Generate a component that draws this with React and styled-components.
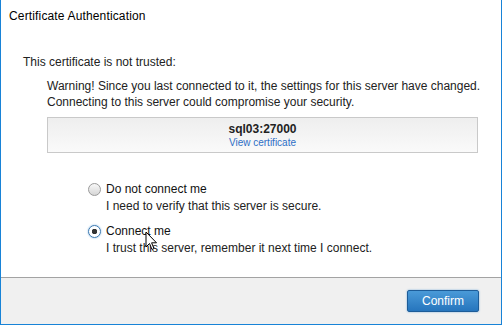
import styled, { createGlobalStyle } from "styled-components";

const GlobalStyle = createGlobalStyle`
  html, body {
    margin: 0;
    padding: 0;
    background: #ffffff;
  }
  body {
    font-family: "Liberation Sans", Arial, sans-serif;
    font-size: 12px;
    color: #1e1e1e;
  }
`;

const Window = styled.div`
  position: relative;
  width: 502px;
  height: 325px;
  box-sizing: border-box;
  border: 1px solid #1883d7;
  border-top: none;
  background: #ffffff;
  display: flex;
  flex-direction: column;
`;

const TitleBar = styled.div`
  height: 32px;
  display: flex;
  align-items: center;
  padding-left: 8px;
  font-size: 12px;
  letter-spacing: 0.15px;
  color: #000;
`;

const Body = styled.div`
  flex: 1;
  padding: 22px 0 0 22px;
  line-height: 16px;
`;

const Heading = styled.div`
  color: #222;
`;

const Warning = styled.div`
  margin: 8px 0 0 24px;
  color: #222;
`;

const CertBox = styled.div`
  margin: 7px 0 0 24px;
  width: 431px;
  height: 36px;
  box-sizing: border-box;
  border: 1px solid #c9c9c9;
  background: linear-gradient(#eeeeee, #fafafa);
  display: flex;
  flex-direction: column;
  align-items: center;
  justify-content: center;
`;

const Server = styled.div`
  font-weight: bold;
  font-size: 12px;
  line-height: 14px;
  color: #222;
`;

const CertLink = styled.a`
  font-size: 10px;
  line-height: 13px;
  color: #2e6fc6;
  text-decoration: none;
`;

const Options = styled.div`
  margin: 28px 0 0 65px;
  display: flex;
  flex-direction: column;
  gap: 9px;
`;

const Option = styled.div`
  display: grid;
  grid-template-columns: 13px auto;
  column-gap: 5px;
  row-gap: 1px;
  align-items: center;
`;

const Radio = styled.span`
  width: 13px;
  height: 13px;
  box-sizing: border-box;
  border-radius: 50%;
  border: 1px solid ${(p) => (p.checked ? "#3a78b0" : "#9a9a9a")};
  background: ${(p) =>
    p.checked
      ? "radial-gradient(circle, #333 0 2.5px, #ffffff 3px)"
      : "linear-gradient(#f8f8f8, #d6d6d6)"};
  box-shadow: ${(p) => (p.checked ? "0 0 2px #7fb2e0" : "none")};
`;

const OptionLabel = styled.span`
  color: #111;
`;

const OptionHint = styled.span`
  grid-column: 2;
  color: #222;
`;

const Footer = styled.div`
  height: 47px;
  border-top: 1px solid #a3a3a3;
  background: #f0f0f0;
  display: flex;
  justify-content: flex-end;
  align-items: flex-start;
  padding: 12px 22px 0 0;
  box-sizing: border-box;
`;

const Button = styled.button`
  width: 72px;
  height: 22px;
  border: 1px solid #1d5c98;
  border-radius: 2px;
  background: linear-gradient(#4a9ad8, #2675bd);
  box-shadow: 0 0 2px #6fa8d8;
  color: #ffffff;
  font-family: "Liberation Sans", Arial, sans-serif;
  font-size: 12px;
  padding: 0;
`;

const Cursor = styled.svg`
  position: absolute;
  left: 144px;
  top: 231px;
`;

export default function App() {
  return (
    <>
      <GlobalStyle />
      <Window>
        <TitleBar>Certificate Authentication</TitleBar>
        <Body>
          <Heading>This certificate is not trusted:</Heading>
          <Warning>
            Warning! Since you last connected to it, the settings for this server have changed.
            <br />
            Connecting to this server could compromise your security.
          </Warning>
          <CertBox>
            <Server>sql03:27000</Server>
            <CertLink href="#">View certificate</CertLink>
          </CertBox>
          <Options>
            <Option>
              <Radio />
              <OptionLabel>Do not connect me</OptionLabel>
              <OptionHint>I need to verify that this server is secure.</OptionHint>
            </Option>
            <Option>
              <Radio checked />
              <OptionLabel>Connect me</OptionLabel>
              <OptionHint>I trust this server, remember it next time I connect.</OptionHint>
            </Option>
          </Options>
        </Body>
        <Footer>
          <Button>Confirm</Button>
        </Footer>
        <Cursor width="13" height="20" viewBox="0 0 13 20">
          <path
            d="M1 1 L1 16 L4.5 12.5 L7 18.5 L9 17.6 L6.6 11.8 L11.5 11.8 Z"
            fill="#ffffff"
            stroke="#000000"
            strokeWidth="1"
            strokeLinejoin="round"
          />
        </Cursor>
      </Window>
    </>
  );
}
